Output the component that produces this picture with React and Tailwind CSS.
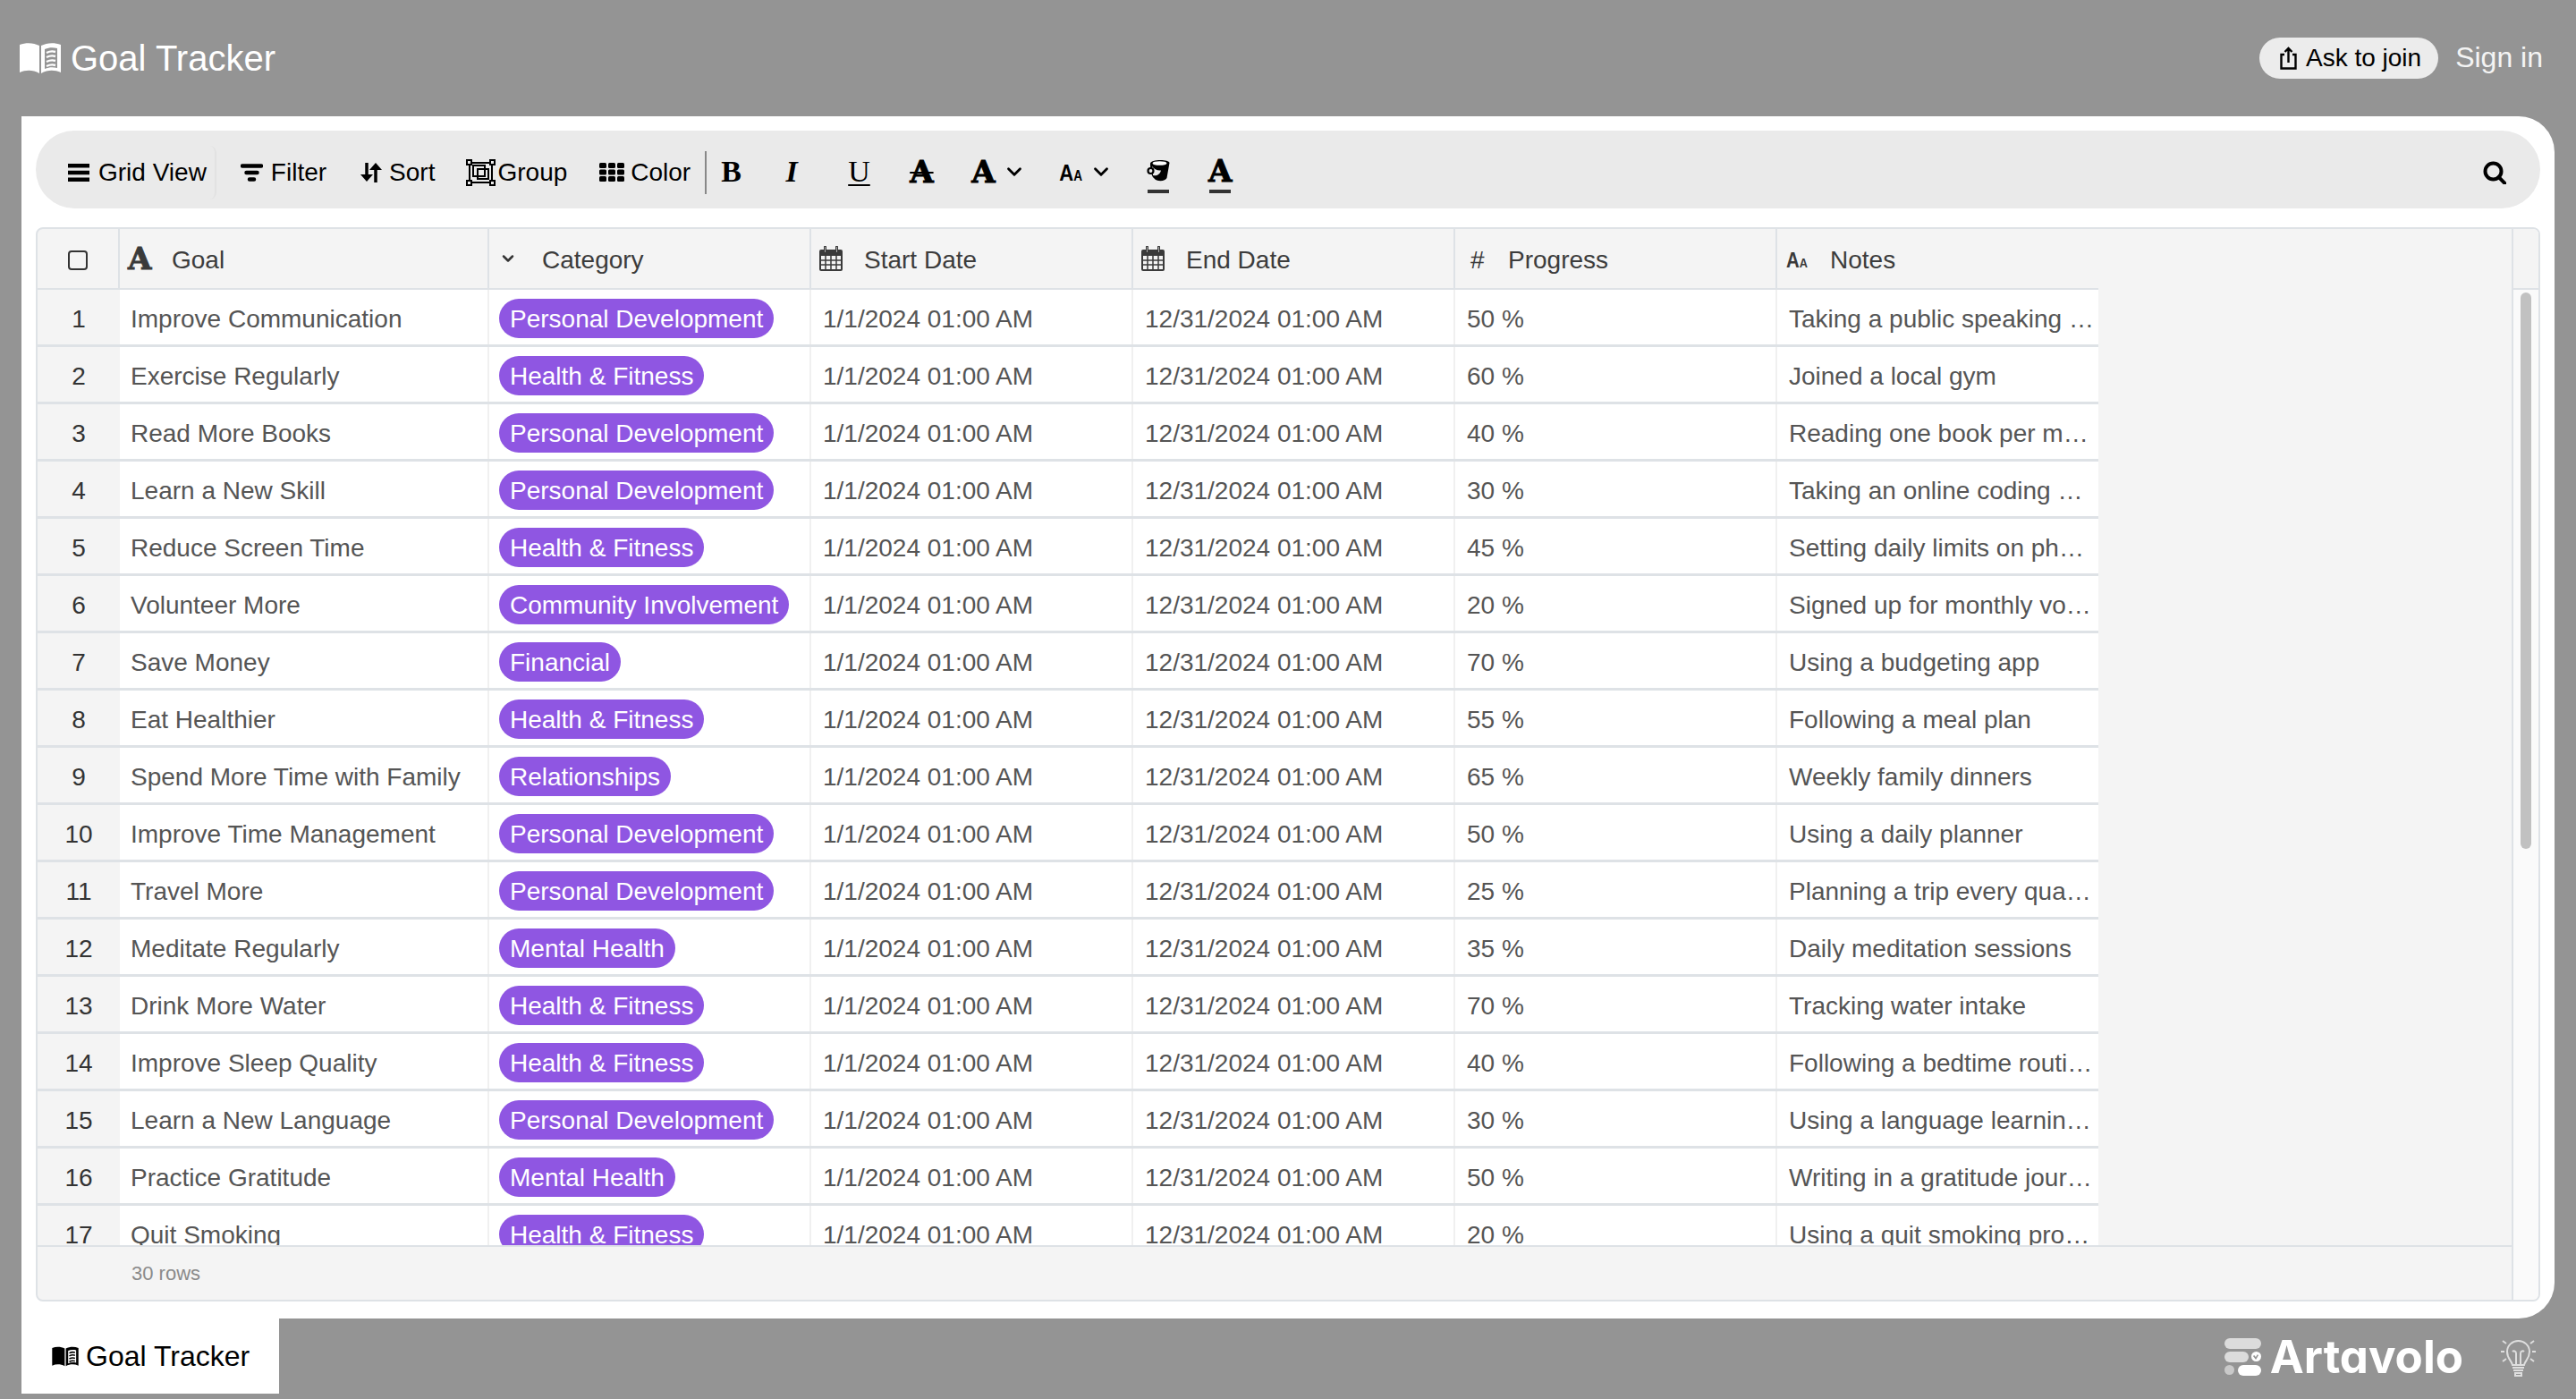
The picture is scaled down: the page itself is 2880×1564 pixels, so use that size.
import React from "react";
import { ChevronDown } from "lucide-react";

const rows = [
  ["Improve Communication", "Personal Development", "50 %", "Taking a public speaking course"],
  ["Exercise Regularly", "Health & Fitness", "60 %", "Joined a local gym"],
  ["Read More Books", "Personal Development", "40 %", "Reading one book per month"],
  ["Learn a New Skill", "Personal Development", "30 %", "Taking an online coding course"],
  ["Reduce Screen Time", "Health & Fitness", "45 %", "Setting daily limits on phone usage"],
  ["Volunteer More", "Community Involvement", "20 %", "Signed up for monthly volunteer work"],
  ["Save Money", "Financial", "70 %", "Using a budgeting app"],
  ["Eat Healthier", "Health & Fitness", "55 %", "Following a meal plan"],
  ["Spend More Time with Family", "Relationships", "65 %", "Weekly family dinners"],
  ["Improve Time Management", "Personal Development", "50 %", "Using a daily planner"],
  ["Travel More", "Personal Development", "25 %", "Planning a trip every quarter"],
  ["Meditate Regularly", "Mental Health", "35 %", "Daily meditation sessions"],
  ["Drink More Water", "Health & Fitness", "70 %", "Tracking water intake"],
  ["Improve Sleep Quality", "Health & Fitness", "40 %", "Following a bedtime routine"],
  ["Learn a New Language", "Personal Development", "30 %", "Using a language learning app"],
  ["Practice Gratitude", "Mental Health", "50 %", "Writing in a gratitude journal"],
  ["Quit Smoking", "Health & Fitness", "20 %", "Using a quit smoking program"],
];

function BookIcon({ className, fill = "#fff", cut = "#949494" }) {
  return (
    <svg viewBox="0 0 46 36" className={className}>
      <path d="M0 3C8 0 16 1 22 4V35C15 31 7 31 0 34Z" fill={fill} />
      <path d="M24 4C30 1 38 0 46 3V34C39 31 31 31 24 35Z" fill={fill} />
      <path d="M28 8C33 6 37 6 42 7V29C37 28 33 28 28 30Z" fill={cut} />
      <path d="M30 12C34 10 37 10 40 11M30 17C34 15 37 15 40 16M30 22C34 20 37 20 40 21M30 27C34 25 37 25 40 26" stroke={fill} strokeWidth="2.4" fill="none" />
    </svg>
  );
}

function CalendarIcon() {
  return (
    <svg viewBox="0 0 26 28" className="w-[26px] h-[28px] shrink-0">
      <path d="M2 4h22a2 2 0 0 1 2 2v20a2 2 0 0 1-2 2H2a2 2 0 0 1-2-2V6a2 2 0 0 1 2-2Z" fill="#3a3a3a" />
      <path d="M2 11h22v15H2Z" fill="#f4f4f4" />
      <path d="M7 11v15M13 11v15M19 11v15M2 16h22M2 21h22" stroke="#3a3a3a" strokeWidth="1.5" />
      <path d="M6.5 1v6M19.5 1v6" stroke="#3a3a3a" strokeWidth="3" strokeLinecap="round" />
      <path d="M6.5 1v6M19.5 1v6" stroke="#f4f4f4" strokeWidth="0.6" />
    </svg>
  );
}

function SmallCaps({ big, small }) {
  return (
    <span className={`flex items-baseline font-bold scale-x-[0.85] font-['Liberation_Sans',sans-serif] ${big}`}>
      A<span className={small}>A</span>
    </span>
  );
}

function HeaderCell({ icon, label, width, border = true }) {
  return (
    <div className={`flex items-center shrink-0 h-full ${width} ${border ? "border-r-2 border-[#dee2e6]" : ""}`}>
      {icon}
      <span className="text-[#3c3c3c] pt-[3px]">{label}</span>
    </div>
  );
}

function Row({ n, row }) {
  return (
    <div className="flex w-[2304px] h-[64px] shrink-0 border-b-[3px] border-[#dee2e6] text-[#555]">
      <div className="w-[92px] shrink-0 bg-[#f4f4f4] text-[#333] flex items-center justify-center pt-[5px]">{n}</div>
      <div className="w-[413px] shrink-0 bg-white border-r-2 border-[#f0f0f0] flex items-center pl-[12px] pt-[5px]">{row[0]}</div>
      <div className="w-[360px] shrink-0 bg-white border-r-2 border-[#f0f0f0] flex items-center pl-[11px] pt-[3px]">
        <span className="bg-[#8f56e2] text-white h-[44px] rounded-[22px] px-[12px] pt-[2px] flex items-center whitespace-nowrap">{row[1]}</span>
      </div>
      <div className="w-[360px] shrink-0 bg-white border-r-2 border-[#f0f0f0] flex items-center pl-[13px] pt-[5px]">1/1/2024 01:00 AM</div>
      <div className="w-[360px] shrink-0 bg-white border-r-2 border-[#f0f0f0] flex items-center pl-[13px] pt-[5px]">12/31/2024 01:00 AM</div>
      <div className="w-[360px] shrink-0 bg-white border-r-2 border-[#f0f0f0] flex items-center pl-[13px] pt-[5px]">{row[2]}</div>
      <div className="w-[359px] shrink-0 bg-white flex items-center pl-[13px] pr-[5px] pt-[5px]">
        <span className="truncate">{row[3]}</span>
      </div>
    </div>
  );
}

function Toolbar() {
  return (
    <div className="flex items-center h-[87px] shrink-0 rounded-[44px] bg-[#eaeaea] pl-[36px] pr-[38px] pt-[6px] text-black text-[28px]">
      <div className="flex items-center gap-[10px] h-[60px] pr-[9px] border-r-2 border-[#e2e2e2] rounded-r-[8px]">
        <svg viewBox="0 0 24 20" className="w-[24px] h-[20px]">
          <path d="M0 0h24v4.5H0ZM0 7.700h24v4.500H0ZM0 15.500h24V20H0Z" fill="#000" />
        </svg>
        <span>Grid View</span>
      </div>
      <div className="flex items-center gap-[9px] ml-[27px]">
        <svg viewBox="0 0 25 20" className="w-[25px] h-[20px]">
          <path d="M2 2.500h21M6.500 10h12M10 17.500h5" stroke="#000" strokeWidth="4.500" strokeLinecap="round" />
        </svg>
        <span>Filter</span>
      </div>
      <div className="flex items-center gap-[8px] ml-[38px]">
        <svg viewBox="0 0 24 22" className="w-[24px] h-[22px]">
          <path d="M7 0v14M17 22V6" stroke="#000" strokeWidth="3.500" />
          <path d="M0 13h14l-7 8ZM10 8l7-8 7 8Z" fill="#000" />
        </svg>
        <span>Sort</span>
      </div>
      <div className="flex items-center gap-[2px] ml-[35px]">
        <svg viewBox="0 0 33 30" className="w-[33px] h-[30px]" fill="none" stroke="#000" strokeWidth="2">
          <path d="M3 4h27M3 26h27M4 4v22M29 4v22" />
          <rect x="1" y="1" width="5" height="5" fill="#eaeaea" />
          <rect x="27" y="1" width="5" height="5" fill="#eaeaea" />
          <rect x="1" y="24" width="5" height="5" fill="#eaeaea" />
          <rect x="27" y="24" width="5" height="5" fill="#eaeaea" />
          <rect x="8" y="7" width="13" height="12" />
          <rect x="13" y="11" width="12" height="11" />
        </svg>
        <span>Group</span>
      </div>
      <div className="flex items-center gap-[7px] ml-[36px]">
        <svg viewBox="0 0 28 21" className="w-[28px] h-[21px]" fill="#000">
          <rect width="8" height="6" rx="1.500" />
          <rect x="10" width="8" height="6" rx="1.500" />
          <rect x="20" width="8" height="6" rx="1.500" />
          <rect y="7.500" width="8" height="6" rx="1.500" />
          <rect x="10" y="7.500" width="8" height="6" rx="1.500" />
          <rect x="20" y="7.500" width="8" height="6" rx="1.500" />
          <rect y="15" width="8" height="6" rx="1.500" />
          <rect x="10" y="15" width="8" height="6" rx="1.500" />
          <rect x="20" y="15" width="8" height="6" rx="1.500" />
        </svg>
        <span>Color</span>
      </div>
      <div className="w-[2px] h-[48px] bg-[#888] ml-[16px]" />
      <span className="ml-[16px] w-[23px] -mt-[2px] text-center font-['Liberation_Serif',serif] font-bold text-[34px] leading-none">B</span>
      <span className="ml-[47px] w-[18px] -mt-[2px] text-center font-['Liberation_Serif',serif] font-bold italic text-[34px] leading-none">I</span>
      <span className="ml-[54px] w-[24px] -mt-[2px] text-center font-['Liberation_Serif',serif] text-[34px] leading-none underline underline-offset-[3px] decoration-2">U</span>
      <span className="ml-[45px] w-[25px] -mt-[2px] text-center font-['DejaVu_Serif',serif] font-bold text-[34px] leading-none line-through decoration-2 [-webkit-text-stroke:1px_black]">A</span>
      <span className="ml-[44px] w-[25px] -mt-[2px] text-center font-['DejaVu_Serif',serif] font-bold text-[34px] leading-none [-webkit-text-stroke:1px_black]">A</span>
      <ChevronDown size={26} strokeWidth={2.6} className="ml-[10px] -mr-[6px] -mt-[2px]" />
      <span className="ml-[42px] w-[27px] flex justify-center leading-none">
        <SmallCaps big="text-[26px]" small="text-[16px]" />
      </span>
      <ChevronDown size={26} strokeWidth={2.6} className="ml-[8px] -mr-[6px] -mt-[2px]" />
      <div className="ml-[44px] w-[26px] flex flex-col items-center mt-[9px]">
        <svg viewBox="0 0 26 26" className="w-[26px] h-[26px]">
          <path d="M4 5C4 0 25 0 25.500 4L22.500 21C21 25 11 25.500 8 21C5 19 4 10 4 5Z" fill="#000" />
          <ellipse cx="14.500" cy="4.500" rx="8" ry="2.300" fill="#fff" />
          <path d="M6 8C8 11 12 13 16 12.500C15 17 11 19 7 18Z" fill="#eaeaea" />
          <circle cx="4.500" cy="13" r="3" fill="#eaeaea" stroke="#000" strokeWidth="2.200" />
        </svg>
        <div className="w-[24px] h-[4px] bg-[#333] mt-[8px]" />
      </div>
      <div className="ml-[43px] w-[26px] flex flex-col items-center mt-[9px]">
        <span className="font-['DejaVu_Serif',serif] font-bold text-[34px] leading-[26px] [-webkit-text-stroke:1px_black]">A</span>
        <div className="w-[24px] h-[4px] bg-[#333] mt-[8px]" />
      </div>
      <svg viewBox="0 0 26 26" className="w-[26px] h-[26px] ml-auto" fill="none" stroke="#000" strokeWidth="4">
        <circle cx="11.500" cy="11.500" r="9" />
        <path d="M17.500 18l7 7" strokeLinecap="square" />
      </svg>
    </div>
  );
}

function Table() {
  return (
    <div className="flex mt-[21px] h-[1201px] border-2 border-[#dee2e6] rounded-[8px] overflow-hidden bg-[#f4f4f4] text-[28px]">
      <div className="flex flex-col flex-1 min-w-0 border-r-2 border-[#dee2e6]">
        <div className="flex flex-col flex-1 min-h-0 overflow-hidden">
          <div className="flex w-[2304px] h-[68px] shrink-0 border-b-2 border-[#dee2e6]">
            <div className="w-[92px] shrink-0 h-full border-r-2 border-[#dee2e6] flex items-center justify-center pt-[3px]">
              <div className="w-[22px] h-[22px] rounded-[4px] border-2 border-[#333]" />
            </div>
            <HeaderCell
              width="w-[413px] pl-[9px] gap-[25px]"
              icon={<span className="w-[24px] text-center font-['DejaVu_Serif',serif] font-bold text-[34px] leading-none text-[#3a3a3a] [-webkit-text-stroke:1px_#3a3a3a]">A</span>}
              label="Goal"
            />
            <HeaderCell
              width="w-[360px] pl-[11px] gap-[28px]"
              icon={<ChevronDown size={20} strokeWidth={3} className="text-[#333]" />}
              label="Category"
            />
            <HeaderCell width="w-[360px] pl-[9px] gap-[24px]" icon={<CalendarIcon />} label="Start Date" />
            <HeaderCell width="w-[360px] pl-[9px] gap-[24px]" icon={<CalendarIcon />} label="End Date" />
            <HeaderCell
              width="w-[360px] pl-[17px] gap-[27px]"
              icon={<span className="w-[15px] text-[#3a3a3a] pt-[3px]">#</span>}
              label="Progress"
            />
            <HeaderCell
              border={false}
              width="w-[359px] pl-[10px] gap-[25px]"
              icon={
                <span className="w-[24px] flex justify-center text-[#3a3a3a] leading-none pt-[3px]">
                  <SmallCaps big="text-[24px]" small="text-[15px]" />
                </span>
              }
              label="Notes"
            />
          </div>
          {rows.map((row, i) => (
            <Row key={i} n={i + 1} row={row} />
          ))}
        </div>
        <div className="h-[61px] shrink-0 border-t-2 border-[#dee2e6] flex items-center pl-[105px] text-[22px] text-[#8a8a8a]">30 rows</div>
      </div>
      <div className="w-[28px] shrink-0 flex flex-col bg-[#fafafa]">
        <div className="h-[68px] shrink-0 bg-[#f4f4f4] border-b-2 border-[#dee2e6]" />
        <div className="w-[12px] h-[622px] mt-[3px] mx-auto rounded-full bg-[#c1c1c1]" />
      </div>
    </div>
  );
}

export default function App() {
  return (
    <div className="w-[2880px] h-[1564px] overflow-hidden flex flex-col bg-[#949494] font-['Liberation_Sans',Arial,sans-serif]">
      <div className="h-[130px] shrink-0 flex items-center pl-[22px] pr-[37px]">
        <BookIcon className="w-[46px] h-[36px]" />
        <span className="ml-[11px] text-[40px] text-white">Goal Tracker</span>
        <div className="ml-auto h-[46px] flex items-center rounded-[23px] bg-[#ececec] pl-[23px] pr-[19px] gap-[10px] text-[28px] text-black">
          <svg viewBox="0 0 19 26" className="w-[19px] h-[26px]" fill="none" stroke="#000" strokeWidth="2.400">
            <path d="M5 9H1.500V24.500H17.500V9H14" />
            <path d="M9.500 18V2M5.500 6l4-4 4 4" />
          </svg>
          Ask to join
        </div>
        <span className="ml-[19px] text-[32px] text-[#f4f4f4] -mt-[2px]">Sign in</span>
      </div>
      <div className="ml-[24px] w-[2832px] h-[1344px] shrink-0 bg-white rounded-r-[40px] px-[16px] pt-[16px]">
        <Toolbar />
        <Table />
      </div>
      <div className="flex flex-1 items-start">
        <div className="ml-[24px] w-[288px] h-[84px] bg-white flex items-center pl-[34px] gap-[8px] text-[32px] text-black">
          <BookIcon className="w-[30px] h-[23px]" fill="#000" cut="#fff" />
          Goal Tracker
        </div>
        <div className="ml-auto flex items-center mt-[17px] mr-[44px]">
          <div className="w-[41px] flex flex-col gap-[3px]">
            <div className="h-[12px] rounded-full bg-[#dcdcdc]" />
            <div className="flex items-center justify-between">
              <div className="w-[27px] h-[12px] rounded-full bg-[#dcdcdc]" />
              <div className="w-[11px] h-[11px] rounded-full bg-white flex items-center justify-center">
                <svg viewBox="0 0 10 10" className="w-[8px] h-[8px]" fill="none" stroke="#949494" strokeWidth="2">
                  <path d="M2 3l3 4 3-5" />
                </svg>
              </div>
            </div>
            <div className="flex items-center justify-between">
              <div className="w-[11px] h-[11px] rounded-full bg-[#c9c9c9]" />
              <div className="w-[26px] h-[12px] rounded-full bg-white" />
            </div>
          </div>
          <span className="ml-[10px] font-['Inter',sans-serif] font-bold text-[51px] leading-none text-white [font-feature-settings:'cv11']">Artavolo</span>
          <svg viewBox="0 0 41 44" className="w-[41px] h-[44px] ml-[41px]" fill="none" stroke="#dedede" strokeWidth="2">
            <path d="M14 31C13 26 8 24 8 16C8 9 14 4 20.500 4C27 4 33 9 33 16C33 24 28 26 27 31Z" />
            <path d="M14 34h13M15 37h11M17 40h7v3h-7Z" />
            <path d="M18 31V18C18 15 15 15 14 16M23 31V18C23 15 26 15 27 16" />
            <path d="M1 16h4M36 16h4M3 4l4 3M38 4l-4 3M3 27l4-3M38 27l-4-3" />
          </svg>
        </div>
      </div>
    </div>
  );
}
